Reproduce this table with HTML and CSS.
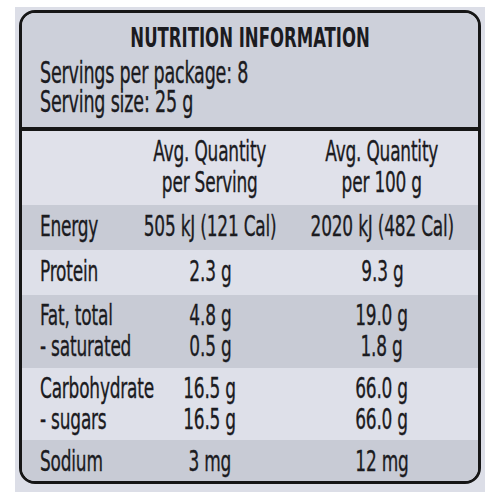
FILE: index.html
```html
<!DOCTYPE html>
<html lang="en">
<head>
  <meta charset="UTF-8">
  <meta name="viewport" content="width=device-width, initial-scale=1.0">
  <title>Nutrition Information</title>
  <link rel="stylesheet" href="styles.css">
</head>
<body>
  <div class="sheet">
    <div class="label">
      <div class="head">
        <h1 class="title"><span class="t">NUTRITION INFORMATION</span></h1>
        <p class="line"><span class="t">Servings per package: 8</span></p>
        <p class="line"><span class="t">Serving size: 25 g</span></p>
      </div>

      <div class="row cols">
        <span class="name"></span>
        <span class="val"><span class="t">Avg. Quantity<br>per Serving</span></span>
        <span class="val"><span class="t">Avg. Quantity<br>per 100 g</span></span>
      </div>
      <div class="row shade">
        <span class="name"><span class="t">Energy</span></span>
        <span class="val"><span class="t">505 kJ (121 Cal)</span></span>
        <span class="val"><span class="t">2020 kJ (482 Cal)</span></span>
      </div>
      <div class="row">
        <span class="name"><span class="t">Protein</span></span>
        <span class="val"><span class="t">2.3 g</span></span>
        <span class="val"><span class="t">9.3 g</span></span>
      </div>
      <div class="row shade two">
        <span class="name"><span class="t">Fat, total<br>- saturated</span></span>
        <span class="val"><span class="t">4.8 g<br>0.5 g</span></span>
        <span class="val"><span class="t">19.0 g<br>1.8 g</span></span>
      </div>
      <div class="row two carb">
        <span class="name"><span class="t">Carbohydrate<br>- sugars</span></span>
        <span class="val"><span class="t">16.5 g<br>16.5 g</span></span>
        <span class="val"><span class="t">66.0 g<br>66.0 g</span></span>
      </div>
      <div class="row shade last">
        <span class="name"><span class="t">Sodium</span></span>
        <span class="val"><span class="t">3 mg</span></span>
        <span class="val"><span class="t">12 mg</span></span>
      </div>
    </div>
  </div>
</body>
</html>
```

FILE: styles.css
```css
body {
  margin: 0;
  background: #ffffff;
  font-family: "DejaVu Sans Condensed", "DejaVu Sans", sans-serif;
  color: #1b1b1f;
}

/* the label face is a tall condensed sans, so squeeze the glyphs */
.t {
  display: inline-block;
  white-space: nowrap;
  transform: scaleX(0.65);
  transform-origin: left center;
  -webkit-text-stroke: 0.35px currentColor;
}

.sheet {
  margin: 7px 15px 0;
  padding: 3px 4px 8px;
  background: #dcdee7;
}

.label {
  border: 3px solid #161616;
  border-radius: 16px;
  overflow: hidden;
  background: #dee0e9;
}

.head {
  height: 118px;
  padding: 0 18px;
  background: #cdd0da;
  border-bottom: 4px solid #161616;
  box-sizing: border-box;
}

.title {
  display: flex;
  justify-content: center;
  margin: 0;
  padding-top: 10px;
  font-size: 27px;
  line-height: 30px;
  font-weight: bold;
}

.title .t {
  transform-origin: center;
  transform: scaleX(0.68);
  -webkit-text-stroke: 0;
}

.line {
  margin: 0;
  font-size: 30px;
  line-height: 29px;
  letter-spacing: -0.3px;
}

.line:first-of-type {
  margin-top: 5px;
}

.row {
  display: grid;
  grid-template-columns: 100px 140px minmax(0, 1fr);
  height: 45px;
  padding: 6px 0 0 18px;
  box-sizing: border-box;
  font-size: 29px;
  line-height: 31px;
  letter-spacing: -0.3px;
}

.row.cols {
  height: 74px;
  padding-top: 5px;
  background: #e0e1ea;
}

.row.two {
  height: 73px;
  padding-top: 5px;
}

.row.carb {
  height: 72px;
}

.row.last {
  height: 41px;
}

.shade {
  background: #c8cbd5;
}

.name {
  min-width: 0;
}

.val {
  display: flex;
  justify-content: center;
  min-width: 0;
  text-align: center;
}

.val .t {
  transform-origin: center;
}

.row .val:last-child {
  padding-left: 6px;
}
```
